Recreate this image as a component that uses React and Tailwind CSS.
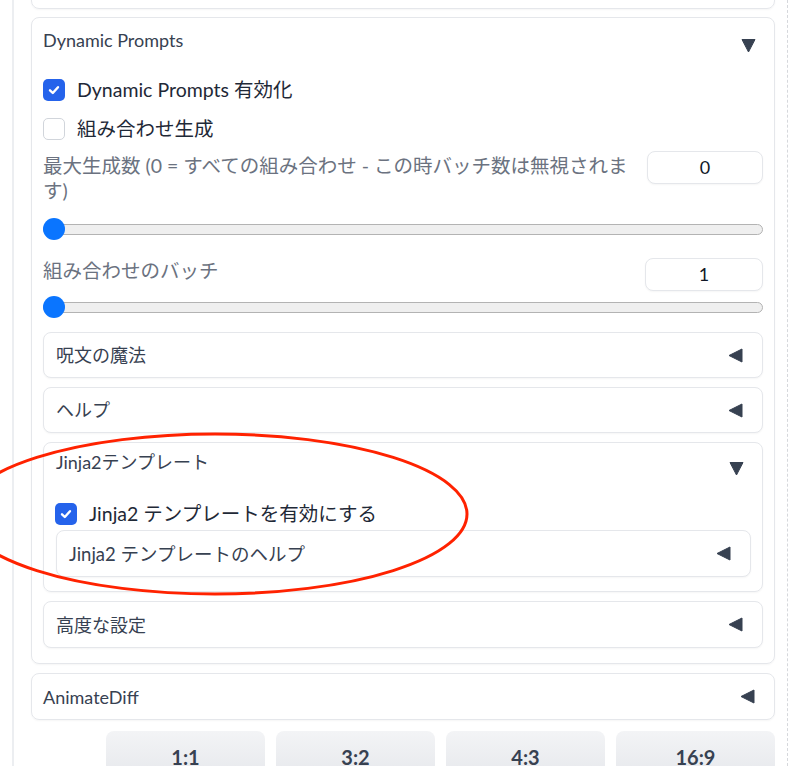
import React from "react";

const FONT = { fontFamily: 'Lato, "Noto Sans CJK JP", sans-serif' };

// small drawn carets used by the accordions
const CaretDown = ({ className = "" }) => (
  <svg width="15" height="15" viewBox="0 0 15 15" className={className}>
    <path d="M1 1.5 H14 L7.5 14 Z" fill="#374151" stroke="#374151" strokeWidth="1" strokeLinejoin="round" />
  </svg>
);

const CaretLeft = ({ className = "" }) => (
  <svg width="15" height="15" viewBox="0 0 15 15" className={className}>
    <path d="M14 1 V14 L1 7.5 Z" fill="#374151" stroke="#374151" strokeWidth="1" strokeLinejoin="round" />
  </svg>
);

const Checkbox = ({ checked }) =>
  checked ? (
    <span className="flex h-[22px] w-[22px] shrink-0 items-center justify-center rounded-[5px] bg-[#2563eb]">
      <svg width="14" height="14" viewBox="0 0 14 14">
        <path d="M3 7.3 L5.8 10 L11 4.2" fill="none" stroke="white" strokeWidth="2.4" strokeLinecap="round" strokeLinejoin="round" />
      </svg>
    </span>
  ) : (
    <span className="h-[22px] w-[22px] shrink-0 rounded-[5px] border border-[#d1d5db] bg-white" />
  );

const Slider = () => (
  <div className="relative flex h-[22px] items-center">
    <div className="h-[11px] w-full rounded-full border border-[#b3b3b3] bg-[#efefef]" />
    <div className="absolute left-0 top-0 h-[22px] w-[22px] rounded-full bg-[#0a75ff]" />
  </div>
);

const Accordion = ({ label, className = "", h = "h-[46px]", textClass = "text-[18px]" }) => (
  <div className={"flex items-center justify-between rounded-lg border border-[#e5e7eb] bg-white pl-[12px] pr-[19px] shadow-[0_1px_2px_rgba(0,0,0,0.04)] " + h + " " + className}>
    <span className={"leading-[24px] text-[#374151] " + textClass}>{label}</span>
    <CaretLeft />
  </div>
);

const NumberBox = ({ value, w }) => (
  <div className={"flex h-[33px] shrink-0 items-center justify-center rounded-lg border border-[#e5e7eb] bg-white text-[18px] text-[#111827] shadow-[0_1px_2px_rgba(0,0,0,0.04)] " + w}>
    {value}
  </div>
);

export default function App() {
  return (
    <div className="relative h-[766px] w-[800px] overflow-hidden bg-white pl-[12px]" style={FONT}>
      <div className="h-full w-[776px] border-r border-dashed border-[#d6d8dc]">
        <div className="flex h-full flex-col border-l-2 border-[#eceef1] pl-[17px] pr-[12px]">
          {/* previous block, mostly scrolled out */}
          <div className="-mt-[41px] h-[50px] shrink-0 rounded-lg border border-[#e5e7eb] shadow-[0_1px_2px_rgba(0,0,0,0.04)]" />

          {/* Dynamic Prompts */}
          <div className="mt-[8px] shrink-0 rounded-lg border border-[#e5e7eb] px-[11px] pb-[15px] shadow-[0_1px_2px_rgba(0,0,0,0.04)]">
            <div className="flex items-start justify-between pt-[10px]">
              <span className="text-[18px] leading-[24px] text-[#374151]">Dynamic Prompts</span>
              <CaretDown className="mr-[7px] mt-[10px]" />
            </div>

            <label className="mt-[26px] flex h-[22px] items-center gap-[12px]">
              <Checkbox checked />
              <span className="text-[19.5px] leading-[22px] text-[#1f2937]">Dynamic Prompts 有効化</span>
            </label>
            <label className="mt-[17px] flex h-[22px] items-center gap-[12px]">
              <Checkbox />
              <span className="text-[19.5px] leading-[22px] text-[#1f2937]">組み合わせ生成</span>
            </label>

            <div className="mt-[11px] flex items-start justify-between gap-[14px]">
              <span className="mt-[2px] text-[19.5px] leading-[25px] text-[#6b7280]">
                最大生成数 (0 = すべての組み合わせ - この時バッチ数は無視されます)
              </span>
              <NumberBox value="0" w="w-[116px]" />
            </div>
            <div className="mt-[15px]">
              <Slider />
            </div>

            <div className="mt-[18px] flex items-start justify-between gap-[14px]">
              <span className="text-[19.5px] leading-[25px] text-[#6b7280]">組み合わせのバッチ</span>
              <NumberBox value="1" w="w-[118px]" />
            </div>
            <div className="mt-[5px]">
              <Slider />
            </div>

            <div className="mt-[14px] flex flex-col gap-[9px]">
              <Accordion label="呪文の魔法" />
              <Accordion label="ヘルプ" />

              {/* Jinja2 */}
              <div className="rounded-lg border border-[#e5e7eb] px-[11px] pb-[14px] shadow-[0_1px_2px_rgba(0,0,0,0.04)]">
                <div className="flex items-start justify-between pt-[7px]">
                  <span className="pl-[1px] text-[18px] leading-[24px] text-[#374151]">Jinja2テンプレート</span>
                  <CaretDown className="mr-[7px] mt-[11px]" />
                </div>
                <label className="mt-[27px] flex h-[22px] items-center gap-[12px]">
                  <Checkbox checked />
                  <span className="text-[19.5px] leading-[22px] text-[#1f2937]">Jinja2 テンプレートを有効にする</span>
                </label>
                <Accordion label="Jinja2 テンプレートのヘルプ" h="h-[47px]" className="ml-[1px] mt-[5px]" textClass="text-[18.5px]" />
              </div>

              <Accordion label="高度な設定" h="h-[47px]" />
            </div>
          </div>

          {/* AnimateDiff */}
          <div className="mt-[9px] flex h-[47px] shrink-0 items-center justify-between rounded-lg border border-[#e5e7eb] pl-[11px] pr-[19px] shadow-[0_1px_2px_rgba(0,0,0,0.04)]">
            <span className="text-[18px] leading-[24px] text-[#374151]">AnimateDiff</span>
            <CaretLeft />
          </div>

          {/* aspect ratio buttons */}
          <div className="mt-[11px] flex shrink-0 justify-end gap-[11px]">
            {["1:1", "3:2", "4:3", "16:9"].map((r) => (
              <button
                key={r}
                className="flex h-[52px] w-[159px] items-center justify-center rounded-lg bg-gradient-to-b from-[#f3f4f6] to-[#e5e7eb] text-[20px] font-bold text-[#374151]"
              >
                {r}
              </button>
            ))}
          </div>
        </div>
      </div>

      {/* red annotation ring */}
      <svg className="pointer-events-none absolute left-0 top-0" width="800" height="766">
        <ellipse cx="215" cy="514" rx="252" ry="80" fill="none" stroke="#ff2200" strokeWidth="3" />
      </svg>
    </div>
  );
}
